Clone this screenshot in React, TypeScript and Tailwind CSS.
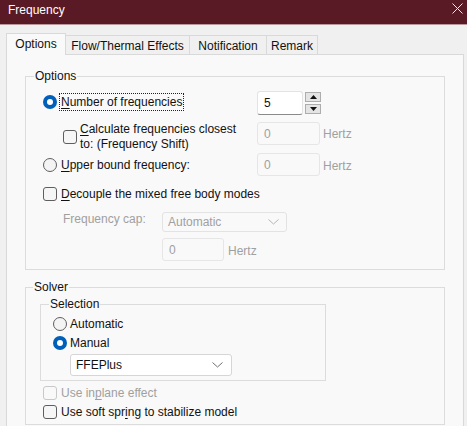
import React from "react";

function Radio({ checked }: { checked?: boolean }) {
  if (checked) {
    return (
      <span className="w-[14px] h-[14px] shrink-0 rounded-full bg-[#005fb8] flex items-center justify-center">
        <span className="w-[6px] h-[6px] rounded-full bg-white" />
      </span>
    );
  }
  return <span className="w-[14px] h-[14px] shrink-0 rounded-full border border-[#5e5e5e] bg-[#f4f4f4]" />;
}

function Check({ disabled }: { disabled?: boolean }) {
  return (
    <span
      className={
        disabled
          ? "w-[14px] h-[14px] shrink-0 rounded-[3px] border border-[#c8c8c8] bg-[#f9f9f9]"
          : "w-[14px] h-[14px] shrink-0 rounded-[3px] border border-[#5e5e5e] bg-[#f6f6f6]"
      }
    />
  );
}

function U({ children }: { children: React.ReactNode }) {
  return <span className="underline underline-offset-[2px] decoration-[1px]">{children}</span>;
}

function Box({ value, w }: { value: string; w: string }) {
  return (
    <div className={`${w} h-[23px] shrink-0 rounded-[3px] border border-[#e6e6e6] bg-[#f9f9f9] pl-[6px] flex items-center text-[#a0a0a0]`}>
      {value}
    </div>
  );
}

function Chevron({ color }: { color: string }) {
  return (
    <svg width="11" height="6" viewBox="0 0 11 6" className="shrink-0">
      <polyline points="0.5,0.5 5.5,5 10.5,0.5" fill="none" stroke={color} strokeWidth="1" />
    </svg>
  );
}

function Tab({ label, w, active }: { label: string; w: string; active?: boolean }) {
  if (active) {
    return (
      <div className={`${w} relative z-10 -mb-px h-[22px] flex items-center justify-center pb-[1px] border border-b-0 border-[#d9d9d9] bg-[#f9f9f9]`}>
        {label}
      </div>
    );
  }
  return (
    <div className={`${w} h-[19px] flex items-center justify-center border border-l-0 border-b-0 border-[#d9d9d9] bg-[#f0f0f0] pt-[1px]`}>
      {label}
    </div>
  );
}

export default function App() {
  return (
    <div className="w-[467px] h-[426px] overflow-hidden bg-[#f0f0f0] text-[12px] leading-[16px] text-[#111] font-['Liberation_Sans',Arial,sans-serif]">
      {/* Title bar */}
      <div className="h-[25px] bg-[#5a1a25] border-b border-[#b8979d] flex items-start justify-between">
        <span className="pl-[8px] pt-[2px] text-white text-[12px]">Frequency</span>
        <svg width="11" height="11" viewBox="0 0 11 11" className="mt-[3px] mr-[4px]">
          <line x1="0.5" y1="0.5" x2="10.5" y2="10.5" stroke="#f3e9ea" strokeWidth="1" />
          <line x1="10.5" y1="0.5" x2="0.5" y2="10.5" stroke="#f3e9ea" strokeWidth="1" />
        </svg>
      </div>

      {/* Tabs */}
      <div className="mt-[8px] pl-[6px] flex items-end">
        <Tab label="Options" w="w-[60px]" active />
        <Tab label="Flow/Thermal Effects" w="w-[124px]" />
        <Tab label="Notification" w="w-[77px]" />
        <Tab label="Remark" w="w-[51px]" />
      </div>

      {/* Panel */}
      <div className="ml-[6px] mr-[3px] h-[400px] border border-[#d9d9d9] bg-[#f9f9f9] pt-[13px] px-[18px]">
        {/* Options group */}
        <fieldset className="border border-[#dcdcdc]">
          <legend className="ml-[8px] px-[1px] leading-[16px]">Options</legend>
          <div className="px-[17px] pt-[7px] pb-[8px]">
            {/* Number of frequencies */}
            <div className="flex items-start">
              <div className="w-[214px] mt-[1px] h-[19px] flex items-center">
                <Radio checked />
                <span className="ml-[2px] px-[1px] h-[18px] flex items-center border border-dotted border-[#222]">
                  <U>N</U>umber of frequencies
                </span>
              </div>
              <div className="w-[46px] h-[24px] rounded-[3px] border border-[#e3e3e3] border-b-[#8a8a8a] bg-white pl-[6px] flex items-center text-[#111]">
                5
              </div>
              <div className="ml-[2px] mt-[1px] flex flex-col gap-[2px]">
                <div className="w-[16px] h-[10px] border border-[#adadad] bg-[#e4e4e4] flex items-center justify-center">
                  <svg width="7" height="4" viewBox="0 0 7 4">
                    <polygon points="0,4 3.5,0 7,4" fill="#111" />
                  </svg>
                </div>
                <div className="w-[16px] h-[10px] border border-[#adadad] bg-[#e4e4e4] flex items-center justify-center">
                  <svg width="7" height="4" viewBox="0 0 7 4">
                    <polygon points="0,0 7,0 3.5,4" fill="#111" />
                  </svg>
                </div>
              </div>
            </div>

            {/* Frequency shift */}
            <div className="mt-[7px] flex items-start">
              <div className="w-[214px] pl-[20px] h-[30px] flex items-center">
                <Check />
                <span className="ml-[3px] leading-[15px]">
                  <U>C</U>alculate frequencies closest
                  <br />
                  to: (Frequency Shift)
                </span>
              </div>
              <Box value="0" w="w-[63px]" />
              <span className="ml-[3px] mt-[4px] text-[#a0a0a0]">Hertz</span>
            </div>

            {/* Upper bound */}
            <div className="mt-[1px] h-[23px] flex items-center">
              <div className="w-[214px] flex items-center">
                <Radio />
                <span className="ml-[4px]">
                  <U>U</U>pper bound frequency:
                </span>
              </div>
              <Box value="0" w="w-[63px]" />
              <span className="ml-[3px] mt-[2px] text-[#a0a0a0]">Hertz</span>
            </div>

            {/* Decouple */}
            <div className="mt-[7px] h-[22px] flex items-center">
              <Check />
              <span className="ml-[4px]">
                <U>D</U>ecouple the mixed free body modes
              </span>
            </div>

            {/* Frequency cap */}
            <div className="mt-[7px] flex items-start">
              <span className="w-[119px] pl-[20px] leading-[15px] text-[#a0a0a0]">Frequency cap:</span>
              <div className="w-[125px] h-[20px] rounded-[3px] border border-[#e3e3e3] bg-[#f9f9f9] pl-[5px] pr-[7px] flex items-center justify-between text-[#a0a0a0]">
                <span>Automatic</span>
                <Chevron color="#b5b5b5" />
              </div>
            </div>

            <div className="mt-[6px] pl-[119px] flex items-center">
              <Box value="0" w="w-[62px]" />
              <span className="ml-[4px] mt-[2px] text-[#a0a0a0]">Hertz</span>
            </div>
          </div>
        </fieldset>

        {/* Solver group */}
        <fieldset className="mt-[9px] border border-[#dcdcdc]">
          <legend className="ml-[7px] px-[1px] leading-[16px]">Solver</legend>
          <div className="pl-[14px] pb-[3px]">
            <fieldset className="mt-[1px] w-[286px] border border-[#dcdcdc]">
              <legend className="ml-[8px] px-[1px] leading-[16px]">Selection</legend>
              <div className="pl-[12px] pt-[2px] pb-[4px]">
                <div className="h-[19px] flex items-center">
                  <Radio />
                  <span className="ml-[3px]">Automatic</span>
                </div>
                <div className="h-[19px] flex items-center">
                  <Radio checked />
                  <span className="ml-[3px]">Manual</span>
                </div>
                <div className="mt-[2px] ml-[17px] w-[162px] h-[22px] rounded-[3px] border border-[#d6d6d6] bg-white pl-[5px] pr-[8px] flex items-center justify-between">
                  <span>FFEPlus</span>
                  <Chevron color="#707070" />
                </div>
              </div>
            </fieldset>

            <div className="mt-[3px] ml-[3px] h-[18px] flex items-center">
              <Check disabled />
              <span className="ml-[4px] text-[#a0a0a0]">
                Use in<U>p</U>lane effect
              </span>
            </div>
            <div className="mt-[1px] ml-[3px] h-[18px] flex items-center">
              <Check />
              <span className="ml-[4px]">
                Use soft spr<U>i</U>ng to stabilize model
              </span>
            </div>
          </div>
        </fieldset>
      </div>
    </div>
  );
}
